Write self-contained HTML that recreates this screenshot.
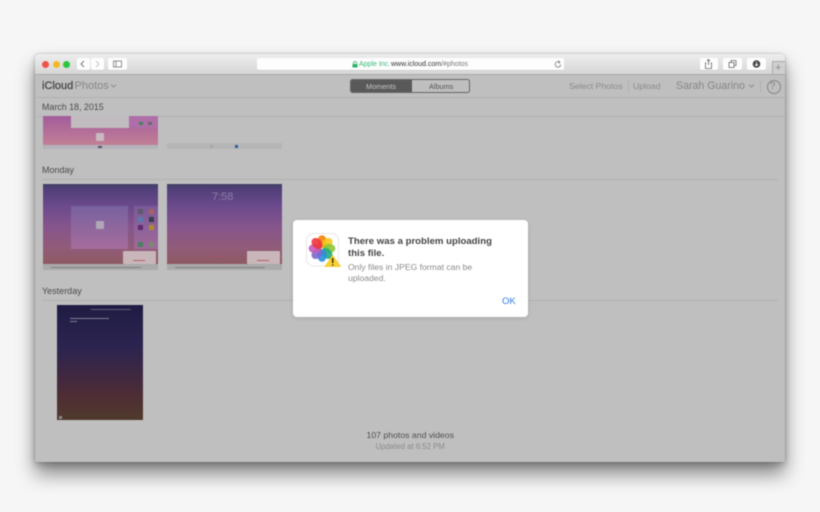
<!DOCTYPE html>
<html><head><meta charset="utf-8"><style>
html,body{margin:0;padding:0;width:820px;height:512px;overflow:hidden;background:#f6f6f6;font-family:"Liberation Sans",sans-serif}
#w{position:absolute;left:0;top:0;width:820px;height:512px;filter:blur(.45px)}
.a{position:absolute}
.t{position:absolute;white-space:nowrap;line-height:1}
.btn{position:absolute;background:#fdfdfd;border-radius:2px;box-shadow:0 .5px 0 #c4c4c4}
.ln{position:absolute;height:1px;background:#adadad}
</style></head><body><div id="w">
<div class="a" style="left:35px;top:54px;width:750px;height:408px;border-radius:4px 4px 2px 2px;box-shadow:0 12px 19px rgba(0,0,0,.46),0 3px 8px rgba(0,0,0,.2),0 0 2px rgba(0,0,0,.25)"></div>
<div class="a" style="left:35px;top:54px;width:750px;height:408px;border-radius:4px 4px 2px 2px;overflow:hidden;background:#bfbfbf">
<div class="a" style="left:0;top:0;width:750px;height:20px;background:linear-gradient(#eeeeee,#d6d6d6);border-bottom:1px solid #a9a9a9"></div>
</div>
<div class="a" style="left:42px;top:60.500px;width:7px;height:7px;border-radius:50%;background:#f0524a"></div>
<div class="a" style="left:52.500px;top:60.500px;width:7px;height:7px;border-radius:50%;background:#f6b926"></div>
<div class="a" style="left:63px;top:60.500px;width:7px;height:7px;border-radius:50%;background:#2ec63f"></div>
<div class="btn" style="left:76.500px;top:58px;width:13px;height:12px"></div>
<div class="btn" style="left:90.500px;top:58px;width:13.500px;height:12px"></div>
<svg class="a" style="left:76px;top:58px" width="30" height="12" fill="none" stroke-width="1"><path d="M8 3 L5 6 L8 9" stroke="#777"/><path d="M20 3 L23 6 L20 9" stroke="#c8c8c8"/></svg>
<div class="btn" style="left:108px;top:58px;width:19px;height:12px"></div>
<svg class="a" style="left:108px;top:58px" width="19" height="12" fill="none" stroke="#777" stroke-width=".8"><rect x="5.500" y="3" width="8" height="6"/><path d="M8 3V9"/></svg>
<div class="btn" style="left:257px;top:58px;width:307px;height:12px"></div>
<svg class="a" style="left:352px;top:61px" width="6" height="7"><rect x="0.500" y="3" width="5" height="3.500" fill="#2fb36b"/><path d="M1.500 3V2a1.500 1.500 0 0 1 3 0V3" fill="none" stroke="#2fb36b" stroke-width=".8"/></svg>
<div class="t" style="left:359px;top:60.500px;font-size:7px;color:#3bb878">Apple Inc.</div>
<div class="t" style="left:391px;top:60.500px;font-size:7px;color:#333">www.icloud.com<span style="color:#777">/#photos</span></div>
<svg class="a" style="left:554px;top:60px" width="8" height="8" fill="none" stroke="#777" stroke-width=".8"><path d="M5.800 2.200A2.800 2.800 0 1 0 6.800 4.500"/><path d="M4.400 .8 L6 2.200 L4.400 3.400"/></svg>
<div class="btn" style="left:699.500px;top:58px;width:18.500px;height:12px"></div>
<div class="btn" style="left:723px;top:58px;width:19px;height:12px"></div>
<div class="btn" style="left:747px;top:58px;width:19px;height:12px"></div>
<svg class="a" style="left:699px;top:58px" width="68" height="12" fill="none" stroke="#666" stroke-width=".8"><path d="M7.500 5H6.500V10.500H12.500V5H11.500M9.500 7V1.500M8 3L9.500 1.500L11 3"/><rect x="30" y="4.500" width="5" height="5"/><path d="M32 4.500V2.500H37V7.500H35"/><circle cx="57.500" cy="6" r="3.800" fill="#444" stroke="none"/><path d="M57.500 3.800V7.500M56 6.300L57.500 7.800L59 6.300" stroke="#fff"/></svg>
<div class="a" style="left:772px;top:61px;width:13px;height:13px;background:#cfcfcf;border:1px solid #a9a9a9;border-bottom:0;border-right:0;box-sizing:border-box"></div>
<div class="t" style="left:775px;top:62.500px;font-size:11px;color:#8a8a8a">+</div>
<div class="t" style="left:42px;top:80.500px;font-size:11px;color:#444;-webkit-text-stroke:.25px #444">iCloud</div>
<div class="t" style="left:74.500px;top:80.500px;font-size:11px;color:#878787">Photos</div>
<svg class="a" style="left:110px;top:83px" width="7" height="6" fill="none" stroke="#808080" stroke-width=".8"><path d="M1 1.500L3.500 4L6 1.500"/></svg>
<div class="a" style="left:350px;top:79px;width:120px;height:14px;box-sizing:border-box;border:1px solid #666;border-radius:2.500px;overflow:hidden"><div class="a" style="left:0;top:0;width:61px;height:12px;background:#595959"></div></div>
<div class="t" style="left:366px;top:82.500px;font-size:7.300px;color:#c6c6c6">Moments</div>
<div class="t" style="left:429px;top:82.500px;font-size:7.300px;color:#555">Albums</div>
<div class="t" style="left:569px;top:81.500px;font-size:8.700px;color:#8b8b8b">Select Photos</div>
<div class="a" style="left:628px;top:81px;width:1px;height:11px;background:#b0b0b0"></div>
<div class="t" style="left:633px;top:81.500px;font-size:8.700px;color:#8b8b8b">Upload</div>
<div class="t" style="left:676px;top:80.500px;font-size:10.600px;color:#868686">Sarah Guarino</div>
<svg class="a" style="left:748px;top:83px" width="7" height="6" fill="none" stroke="#808080" stroke-width=".8"><path d="M1 1.500L3.500 4L6 1.500"/></svg>
<div class="a" style="left:760px;top:81px;width:1px;height:11px;background:#b0b0b0"></div>
<div class="a" style="left:766.500px;top:80px;width:12px;height:12px;border:.8px solid #858585;border-radius:50%"></div>
<div class="t" style="left:769.800px;top:81.500px;font-size:10px;color:#858585">?</div>
<div class="ln" style="left:36px;top:97px;width:749px;background:#b0b0b0"></div>
<div class="t" style="left:42px;top:103px;font-size:8.900px;color:#4c4c4c">March 18, 2015</div>
<div class="ln" style="left:36px;top:116px;width:749px;background:#b2b2b2"></div>
<div class="a" style="left:42.500px;top:116px;width:115px;height:28.500px;background:linear-gradient(#a35c9c,#c28096);overflow:hidden"><div class="a" style="left:28.500px;top:0;width:58px;height:11.500px;background:#c0bcc0"></div><div class="a" style="left:86.500px;top:0;width:29px;height:12px;background:#ae6fa8"></div><div class="a" style="left:96px;top:6px;width:4px;height:3px;background:#4a8060"></div><div class="a" style="left:105px;top:6px;width:4px;height:3px;background:#6a6a6a"></div><div class="a" style="left:53px;top:17px;width:8px;height:8px;background:#c8b8c0;border-radius:1px"></div></div>
<div class="a" style="left:42.500px;top:144.500px;width:115px;height:4.500px;background:#b3b3b9"></div>
<div class="a" style="left:98px;top:145.500px;width:4px;height:2.500px;background:#554a70"></div>
<div class="a" style="left:167px;top:143px;width:114.500px;height:6px;background:#b5b5b5"></div>
<div class="a" style="left:234.500px;top:144.500px;width:3px;height:3px;background:#2c5f9e"></div>
<div class="a" style="left:210px;top:144.500px;width:3px;height:3px;background:#a8a8a8"></div>
<div class="t" style="left:42px;top:166px;font-size:9px;color:#4c4c4c">Monday</div>
<div class="ln" style="left:42px;top:179px;width:736px;background:#b2b2b2"></div>
<div class="a" style="left:42.500px;top:184px;width:115px;height:86px;overflow:hidden;background:linear-gradient(#4a3c72 0%,#6a4a8c 25%,#87558c 50%,#915c78 75%,#8e5a62 93%,#aaa 93%)">
<div class="a" style="left:0;top:0;width:115px;height:3px;background:#45406a"></div>
<div class="a" style="left:28.500px;top:21.500px;width:57px;height:43px;background:linear-gradient(#79619f,#a56d9c)"></div>
<div class="a" style="left:91px;top:21.500px;width:24px;height:43px;background:linear-gradient(#7a5a98,#a06a9a)"></div>
<div class="a" style="left:95px;top:25px;width:5px;height:5px;background:#5b5a6a"></div><div class="a" style="left:106px;top:25px;width:5px;height:5px;background:#a86060"></div>
<div class="a" style="left:95px;top:33px;width:5px;height:5px;background:#5a7ab0"></div><div class="a" style="left:106px;top:33px;width:5px;height:5px;background:#3c3c50"></div>
<div class="a" style="left:95px;top:41px;width:5px;height:5px;background:#602a70"></div><div class="a" style="left:106px;top:41px;width:5px;height:5px;background:#b08a30"></div>
<div class="a" style="left:95px;top:58px;width:5px;height:5px;background:#4a8060"></div><div class="a" style="left:106px;top:58px;width:5px;height:5px;background:#7a8a70"></div>
<div class="a" style="left:53px;top:37px;width:8px;height:8px;background:#b0a8b8;border-radius:1px"></div>
<div class="a" style="left:80px;top:67px;width:33px;height:13px;background:#c8b6ba;border-radius:1px"></div>
<div class="a" style="left:90px;top:76px;width:12px;height:1px;background:#b06068"></div>
<div class="a" style="left:8px;top:82.500px;width:90px;height:1px;background:#808080"></div>
</div>
<div class="a" style="left:167px;top:184px;width:114.500px;height:86px;overflow:hidden;background:linear-gradient(#4a3c72 0%,#6a4a8c 25%,#87558c 50%,#915c78 75%,#8e5a62 93%,#aaa 93%)">
<div class="a" style="left:0;top:0;width:115px;height:3px;background:#45406a"></div>
<div class="t" style="left:45px;top:8px;font-size:11px;color:#8c7ea8">7:58</div>
<div class="a" style="left:80px;top:67px;width:33px;height:13px;background:#c8b6ba;border-radius:1px"></div>
<div class="a" style="left:90px;top:76px;width:12px;height:1px;background:#b06068"></div>
<div class="a" style="left:46px;top:72px;width:14px;height:1px;background:#a0565e"></div>
<div class="a" style="left:8px;top:82.500px;width:90px;height:1px;background:#808080"></div>
</div>
<div class="t" style="left:42px;top:287px;font-size:9px;color:#4c4c4c">Yesterday</div>
<div class="ln" style="left:42px;top:300px;width:736px;background:#b2b2b2"></div>
<div class="a" style="left:57.300px;top:305px;width:86px;height:115px;overflow:hidden;background:linear-gradient(#1f1c43 0%,#2b2450 35%,#43293f 65%,#4f2e34 80%,#4f3a2c 100%)">
<div class="a" style="left:34px;top:3.500px;width:40px;height:1px;background:#5e5e78"></div>
<div class="a" style="left:13px;top:12.500px;width:39px;height:1px;background:#7e7e92"></div>
<div class="a" style="left:13px;top:15.500px;width:7px;height:1px;background:#7e7e92"></div>
<div class="a" style="left:2px;top:111px;width:3px;height:3px;background:#8a8a8a"></div>
</div>
<div class="t" style="left:366.500px;top:431px;font-size:8.700px;color:#505050">107 photos and videos</div>
<div class="t" style="left:375.500px;top:443px;font-size:7.800px;color:#8c8c8c">Updated at 6:52 PM</div>

<div class="a" style="left:293px;top:220px;width:235px;height:97px;background:#fff;border-radius:4px;box-shadow:0 1px 5px rgba(0,0,0,.12)"></div>
<svg class="a" style="left:305px;top:232px" width="38" height="38" viewBox="0 0 38 38">
<rect x="1.500" y="1.500" width="32" height="32.500" rx="7" fill="#fff" stroke="#dedede" stroke-width=".7"/>
<g transform="translate(17 16.500)">
<ellipse cx="0" cy="-7" rx="4.700" ry="6.300" fill="#f78d1e"/>
<ellipse cx="0" cy="-7" rx="4.700" ry="6.300" fill="#f6c81a" opacity=".9" transform="rotate(45)"/>
<ellipse cx="0" cy="-7" rx="4.700" ry="6.300" fill="#8cc63a" opacity=".9" transform="rotate(90)"/>
<ellipse cx="0" cy="-7" rx="4.700" ry="6.300" fill="#23ab7e" opacity=".9" transform="rotate(135)"/>
<ellipse cx="0" cy="-7" rx="4.700" ry="6.300" fill="#2a8fdc" opacity=".9" transform="rotate(180)"/>
<ellipse cx="0" cy="-7" rx="4.700" ry="6.300" fill="#7a68cf" opacity=".9" transform="rotate(225)"/>
<ellipse cx="0" cy="-7" rx="4.700" ry="6.300" fill="#c45cb8" opacity=".9" transform="rotate(270)"/>
<ellipse cx="0" cy="-7" rx="4.700" ry="6.300" fill="#ee3540" opacity=".9" transform="rotate(315)"/>
</g>
<path d="M27.700 23.500L35.500 34.500H20Z" fill="#f7cf36" stroke="#f7cf36" stroke-width="1" stroke-linejoin="round"/>
<path d="M27.700 26V31" stroke="#3a3000" stroke-width="1.500"/><circle cx="27.700" cy="33" r=".8" fill="#3a3000"/>
</svg>
<div class="t" style="left:348px;top:235.500px;font-size:9.600px;line-height:12px;font-weight:bold;color:#444">There was a problem uploading<br>this file.</div>
<div class="t" style="left:348px;top:262px;font-size:8.600px;line-height:11px;color:#8a8a8a">Only files in JPEG format can be<br>uploaded.</div>
<div class="t" style="left:502px;top:296.500px;font-size:9.500px;color:#2f7de1">OK</div>
</div></body></html>
